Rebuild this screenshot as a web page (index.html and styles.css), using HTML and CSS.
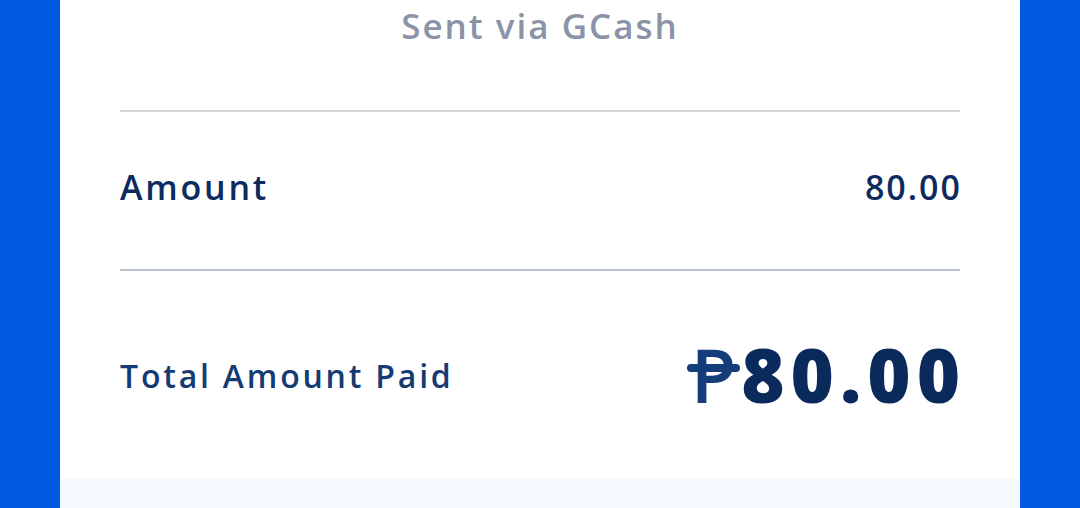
FILE: index.html
```html
<!DOCTYPE html>
<html lang="en">
<head>
  <meta charset="UTF-8" />
  <meta name="viewport" content="width=device-width,initial-scale=1" />
  <title>GCash Receipt</title>
  <link rel="stylesheet" href="styles.css">
</head>
<body>
  <div class="receipt">
    <div class="card">
      <!-- source -->
      <div class="sent">Sent via GCash</div>
      <div class="divider"></div>
      <!-- amount -->
      <div class="row amount-row">
        <span class="label">Amount</span>
        <span class="value">80.00</span>
      </div>
      <div class="divider dark"></div>
      <!-- total -->
      <div class="row total-row">
        <span class="total-label">Total Amount Paid</span>
        <span class="total-value"><span class="peso">P</span>80.00</span>
      </div>
    </div>
    <div class="footer"></div>
  </div>
</body>
</html>
```
FILE: styles.css
```css
body { margin: 0; background: #0059de; font-family: 'Open Sans', Arial, sans-serif; }
.receipt { margin: 0 60px; height: 508px; display: flex; flex-direction: column; }
.card { background: #fff; height: 479px; padding: 0 60px; box-sizing: border-box; }
.footer { flex: 1; background: #f5f8fe; }
.sent { height: 110px; text-align: center; font-size: 35px; color: #8a94a6; line-height: 52px; font-weight: 600; letter-spacing: 2px; }
.divider { height: 2px; background: #d6d6d6; }
.divider.dark { background: #b9c1d0; }
.row { display: flex; justify-content: space-between; align-items: center; }
.amount-row { height: 157px; padding-bottom: 8px; box-sizing: border-box; }
.label, .value { font-size: 34px; color: #0d2b5e; font-weight: 600; letter-spacing: 2.8px; }
.value { letter-spacing: 2px; margin-right: -2px; }
.total-row { height: 208px; }
.total-label { font-size: 32px; font-weight: 600; color: #143b74; letter-spacing: 2.8px; }
.total-value { font-size: 74px; font-weight: 800; color: #0b2a5c; line-height: 1; letter-spacing: 6px; margin-right: -6px; }
.peso { display: inline-block; position: relative; font-weight: 600; color: #153d7a; letter-spacing: 0; margin-right: 5px; }
.peso::after { content: ""; position: absolute; left: -4px; right: -4px; top: 26px; height: 8px; border-radius: 4px; background: #153d7a; }
```
